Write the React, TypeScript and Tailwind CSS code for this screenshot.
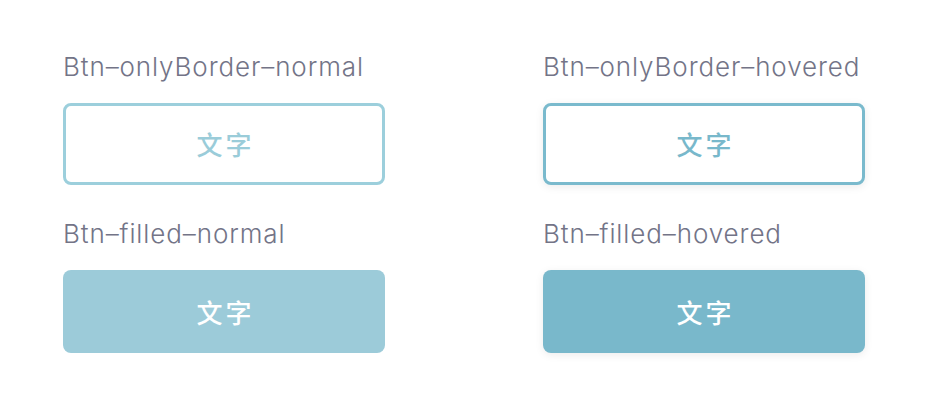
import React from "react";

const labelCls =
  "text-[26px] leading-[32px] font-light text-[#737487] tracking-[0.9px] font-['Inter','Liberation_Sans',sans-serif]";

const btnText =
  "text-[26px] leading-none tracking-[3px] pl-[3px] font-medium font-['Noto_Sans_CJK_SC',sans-serif]";

const Block = ({
  label,
  children,
}: {
  label: string;
  children: React.ReactNode;
}) => (
  <div className="flex flex-col gap-[20px] w-[322px]">
    <p className={labelCls}>{label}</p>
    {children}
  </div>
);

const App = () => {
  return (
    <div className="w-[928px] h-[416px] bg-white pl-[63px] pt-[51px]">
      <div className="grid grid-cols-[322px_322px] gap-x-[158px] gap-y-[33px]">
        <Block label="Btn–onlyBorder–normal">
          <button className="h-[82px] rounded-[8px] border-[3px] border-[#9ccfdc] bg-white flex items-center justify-center">
            <span className={`${btnText} text-[#9accd9]`}>文字</span>
          </button>
        </Block>
        <Block label="Btn–onlyBorder–hovered">
          <button className="h-[82px] rounded-[8px] border-[3px] border-[#7abacd] bg-white flex items-center justify-center shadow-[0_2px_8px_rgba(0,0,0,0.08)]">
            <span className={`${btnText} text-[#78b8cb]`}>文字</span>
          </button>
        </Block>
        <Block label="Btn–filled–normal">
          <button className="h-[83px] rounded-[8px] bg-[#9ccbd9] flex items-center justify-center">
            <span className={`${btnText} text-white`}>文字</span>
          </button>
        </Block>
        <Block label="Btn–filled–hovered">
          <button className="h-[83px] rounded-[8px] bg-[#79b8cb] flex items-center justify-center shadow-[0_2px_8px_rgba(0,0,0,0.08)]">
            <span className={`${btnText} text-white`}>文字</span>
          </button>
        </Block>
      </div>
    </div>
  );
};

export default App;
